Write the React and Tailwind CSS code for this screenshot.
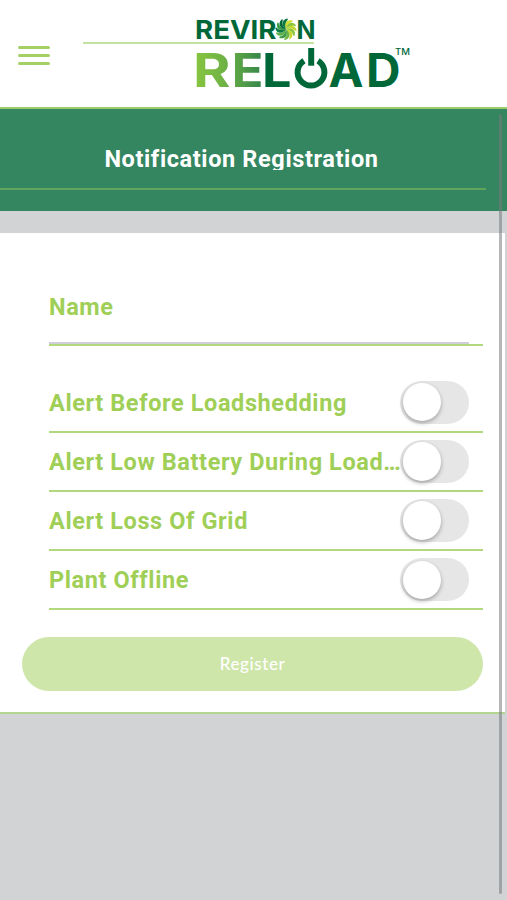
import React, { useState } from 'react';

const alerts = [
  'Alert Before Loadshedding',
  'Alert Low Battery During Loadshedding',
  'Alert Loss Of Grid',
  'Plant Offline',
];

const swirlColors = ['#d3de32', '#8cc63f', '#c5d82e', '#8cc63f', '#c5d82e', '#6fb644', '#3d9b48', '#5fb14a', '#0b7a43', '#3d9b48', '#00693a', '#0b7a43'];

const Logo = () => (
  <svg className="w-[218px] h-[76px] overflow-visible" viewBox="194 16 218 76" fontFamily="Inter, sans-serif" fontWeight="700">
    <defs>
      <linearGradient id="reload" gradientUnits="userSpaceOnUse" x1="196" y1="0" x2="276" y2="0">
        <stop offset="0" stopColor="#86c440" />
        <stop offset="0.35" stopColor="#6fb345" />
        <stop offset="0.8" stopColor="#38894a" />
        <stop offset="0.86" stopColor="#006838" />
      </linearGradient>
    </defs>
    <g fill="#006838" fontSize="26" fontWeight="700">
      <text x="195" y="39" textLength="81.5" lengthAdjust="spacingAndGlyphs">REVIR</text>
      <text x="296.5" y="39" textLength="19" lengthAdjust="spacingAndGlyphs">N</text>
    </g>
    <g>
      {swirlColors.map((color, i) => (
        <path key={i} d="M286 29.3C283.5 24 286.5 18.8 292.3 20.6C293 21 292.8 21.8 292 22C288.8 22.8 286.6 25.2 286 29.3Z" fill={color} transform={`rotate(${i * 30} 286 29.3)`} />
      ))}
    </g>
    <g fill="url(#reload)" fontSize="46.8">
      <text x="193" y="87.3" textLength="37.5" lengthAdjust="spacingAndGlyphs">R</text>
      <text x="231.5" y="87.3" textLength="32" lengthAdjust="spacingAndGlyphs">E</text>
      <text x="262" y="87.3" textLength="29.5" lengthAdjust="spacingAndGlyphs">L</text>
    </g>
    <g fill="none" stroke="#006838" strokeWidth="6">
      <path d="M304 60.7A13.4 13.4 0 1 0 318 60.7" />
      <path d="M311.2 48V65.7" />
    </g>
    <g fill="#006838" fontSize="46.8">
      <text x="328.5" y="87.3" textLength="35" lengthAdjust="spacingAndGlyphs">A</text>
      <text x="366" y="87.3" textLength="34.5" lengthAdjust="spacingAndGlyphs">D</text>
    </g>
    <text x="395" y="54.5" fill="#006838" fontSize="8.5" fontWeight="500" textLength="15" lengthAdjust="spacingAndGlyphs">TM</text>
  </svg>
);

const Toggle = ({ checked, onChange }) => (
  <button
    type="button"
    role="switch"
    aria-checked={checked}
    onClick={onChange}
    className={`w-[69px] h-[43px] shrink-0 rounded-full p-[2.5px] flex items-center ${checked ? 'bg-[#9ccc50] justify-end' : 'bg-[#e6e6e6]'}`}
  >
    <span className="size-[38.5px] rounded-full bg-white shadow-[0_2px_4px_rgba(0,0,0,0.3)]" />
  </button>
);

const App = () => {
  const [enabled, setEnabled] = useState({});
  const toggle = (label) => setEnabled({ ...enabled, [label]: !enabled[label] });

  return (
    <div className="relative h-[900px] w-full overflow-hidden bg-[#d1d3d4] font-['Roboto',sans-serif]">
      <header className="relative h-[109px] bg-white border-b-2 border-[#9bcb6a] flex items-start">
        <button type="button" aria-label="Menu" className="ml-[18px] mt-[46px] flex flex-col gap-[5px]">
          <span className="w-8 h-[3px] rounded-full bg-[#a5d065]" />
          <span className="w-8 h-[3px] rounded-full bg-[#a5d065]" />
          <span className="w-8 h-[3px] rounded-full bg-[#a5d065]" />
        </button>
        <div className="ml-[144px] mt-4">
          <Logo />
        </div>
        <div className="absolute left-[83px] top-[42px] w-[231px] h-[2px] bg-[#c5e3a0]" />
      </header>

      <div className="h-[102px] bg-[#348660]">
        <div className="h-[81px] w-[486px] pt-[37px] pr-[3px] border-b-2 border-[#60a55b]">
          <h1 className="h-[23.5px] overflow-hidden text-center text-[23.5px] leading-[27px] font-bold tracking-[0.62px] text-white">
            Notification Registration
          </h1>
        </div>
      </div>

      <main className="mt-[22px] mr-[2px] h-[481px] bg-white border-b-2 border-[#b3d590] pt-[49px]">
        <form onSubmit={(e) => e.preventDefault()}>
          <div className="ml-[49px] mr-[22px] text-[23.5px] font-bold tracking-[0.6px] text-[#a0cf57]">
            <div className="h-[64px] border-b-2 border-[#b2d87e] pr-[14px] flex flex-col">
              <label htmlFor="name" className="h-[50px] leading-[50px]">Name</label>
              <input id="name" className="w-full h-[12px] border-b-2 border-[#cfcfda] outline-none" />
            </div>
            <div className="pt-[27.6px]">
              {alerts.map((label) => (
                <div key={label} className="h-[59.2px] border-b-2 border-[#b2d87e] pr-[14px] flex items-center">
                  <span className="flex-1 truncate pt-[2px] -mr-[5px] tracking-[0.6px]">{label}</span>
                  <Toggle checked={!!enabled[label]} onChange={() => toggle(label)} />
                </div>
              ))}
            </div>
          </div>
          <button type="submit" className="block ml-[22px] mt-[26.4px] w-[461px] h-[54px] rounded-full bg-[#cee6a9] font-['Lato',sans-serif] text-[17px] font-medium tracking-[0.6px] text-white">
            Register
          </button>
        </form>
      </main>

      {/* scrollbar */}
      <div className="absolute right-[5px] top-[114px] w-[3px] h-[780px] rounded-full bg-[#767a7c]/55" />
    </div>
  );
};

export default App;
